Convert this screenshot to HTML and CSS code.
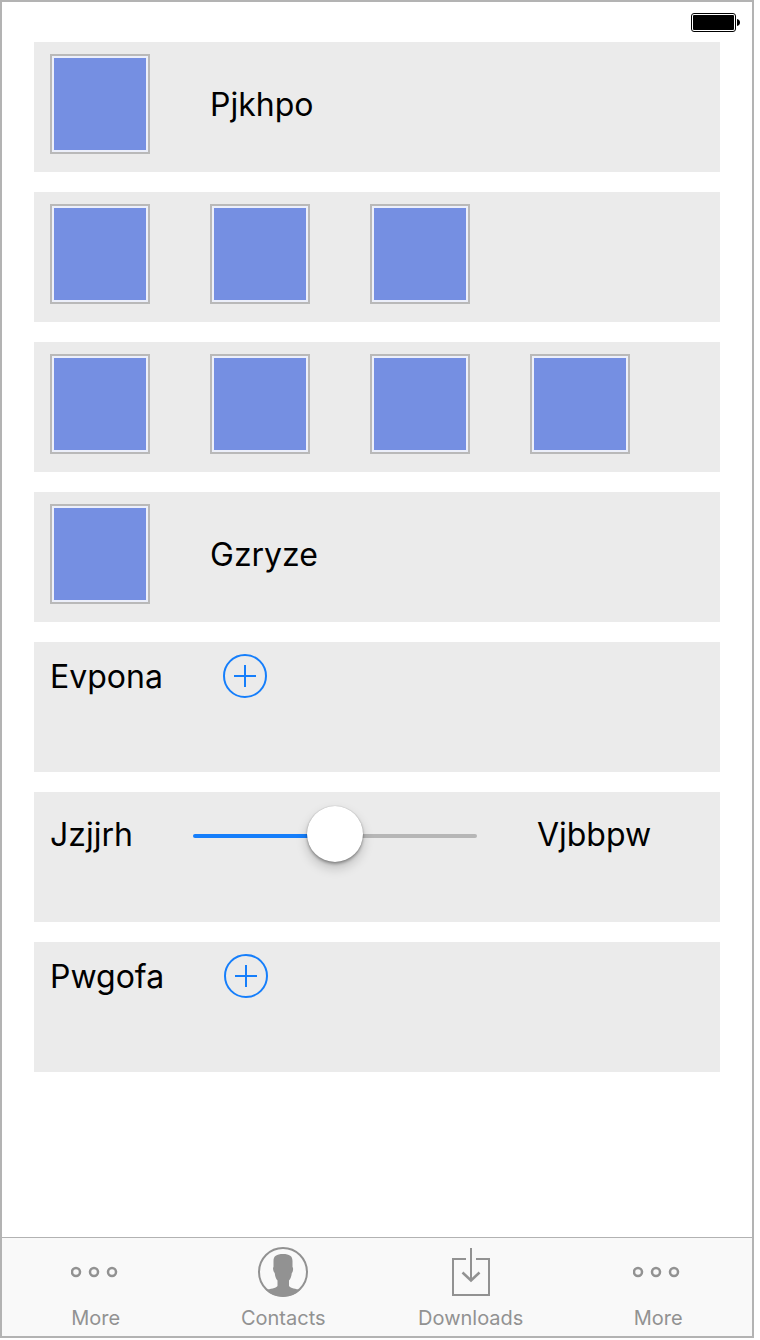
FILE: index.html
```
<!DOCTYPE html>
<html lang="en">
<head>
<meta charset="utf-8">
<meta name="viewport" content="width=device-width, initial-scale=1">
<title>Contacts</title>
<link rel="stylesheet" href="styles.css">
</head>
<body>
<div class="phone">
  <header class="status">
    <svg class="battery" width="49" height="19" viewBox="0 0 49 19" aria-hidden="true">
      <rect x=".5" y=".5" width="44" height="18" rx="2.5" fill="#fff" stroke="#000"/>
      <rect x="2" y="2" width="41" height="15" rx="1" fill="#000"/>
      <path d="M46 6c2 .4 3 1.700 3 3.500s-1 3.100-3 3.500z" fill="#000"/>
    </svg>
  </header>
  <main class="rows">
    <section class="row">
      <div class="items"><span class="tile"></span><span class="label">Pjkhpo</span></div>
    </section>
    <section class="row">
      <div class="items"><span class="tile"></span><span class="tile"></span><span class="tile"></span></div>
    </section>
    <section class="row">
      <div class="items"><span class="tile"></span><span class="tile"></span><span class="tile"></span><span class="tile"></span></div>
    </section>
    <section class="row">
      <div class="items"><span class="tile"></span><span class="label">Gzryze</span></div>
    </section>
    <section class="row">
      <div class="items">
        <span class="label" id="first-add">Evpona</span>
        <button class="add" type="button" aria-labelledby="first-add">
          <svg width="44" height="44" viewBox="0 0 44 44" aria-hidden="true"><circle cx="22" cy="22" r="21"/><path d="M11 22h22M22 11v22"/></svg>
        </button>
      </div>
    </section>
    <section class="row">
      <div class="items">
        <label class="label" for="level">Jzjjrh</label>
        <input class="slider" id="level" type="range" min="0" max="100" value="50">
        <span class="label">Vjbbpw</span>
      </div>
    </section>
    <section class="row">
      <div class="items">
        <span class="label" id="second-add">Pwgofa</span>
        <button class="add" type="button" aria-labelledby="second-add">
          <svg width="44" height="44" viewBox="0 0 44 44" aria-hidden="true"><circle cx="22" cy="22" r="21"/><path d="M11 22h22M22 11v22"/></svg>
        </button>
      </div>
    </section>
  </main>
  <nav class="tabs">
    <a class="tab" href="#more">
      <svg class="icon dots" width="50" height="52" viewBox="0 0 50 52" aria-hidden="true"><circle cx="5" cy="26" r="4"/><circle cx="23" cy="26" r="4"/><circle cx="41" cy="26" r="4"/></svg>
      More
    </a>
    <a class="tab" href="#contacts">
      <svg class="icon" width="50" height="52" viewBox="0 0 50 52" aria-hidden="true">
        <circle cx="25" cy="26" r="24"/>
        <path class="solid" d="M15.500 15C15.500 10 18.500 8 25 8s9.500 2 9.500 7v6c1 .8.8 4.500-.7 6-.4 3.500-1.300 6-2.800 7.500V40c1.500 2.500 7 2.800 11 4C37.500 48.500 31 50.500 25 50.500S12.500 48.500 8 44c4-1.200 10-1.500 11.500-4v-5.500c-1.500-1.500-2.400-4-2.800-7.500-1.500-1.500-2.200-5.200-1.200-6z"/>
      </svg>
      Contacts
    </a>
    <a class="tab" href="#downloads">
      <svg class="icon" width="50" height="52" viewBox="0 0 50 52" aria-hidden="true"><path d="M20 13H7v36h36V13H30M25 2v33"/><path class="head" d="M16.500 26.500l8.500 8 8.500-8"/></svg>
      Downloads
    </a>
    <a class="tab" href="#more">
      <svg class="icon dots" width="50" height="52" viewBox="0 0 50 52" aria-hidden="true"><circle cx="5" cy="26" r="4"/><circle cx="23" cy="26" r="4"/><circle cx="41" cy="26" r="4"/></svg>
      More
    </a>
  </nav>
</div>
</body>
</html>
```
FILE: styles.css
```
* {
  box-sizing: border-box;
}

body {
  margin: 0;
  padding: 0 6px 2px 0;
  background: #fff;
  color: #000;
  font-family: Inter, "Liberation Sans", sans-serif;
}

.phone {
  display: flex;
  flex-direction: column;
  min-height: calc(100vh - 2px);
  border: 2px solid #b3b3b3;
}

.status {
  display: flex;
  justify-content: flex-end;
  height: 40px;
  padding: 11px 12px 0;
}

.rows {
  display: flex;
  flex: 1;
  flex-direction: column;
  gap: 20px;
  padding: 0 32px 32px;
}

.row {
  min-height: 130px;
  padding: 12px 16px;
  background: #ebebeb;
}

.items {
  display: flex;
  align-items: center;
  gap: 60px;
}

.tile {
  width: 100px;
  height: 100px;
  padding: 2px;
  border: 2px solid #b9b9b9;
  background: #758fe2 content-box;
  box-shadow: inset 0 0 0 2px #eceffa;
}

.label {
  padding-top: 2px;
  font-size: 32px;
  line-height: 40px;
}

.add {
  width: 44px;
  height: 44px;
  padding: 0;
  border: 0;
  background: none;
}

.add svg {
  display: block;
  fill: none;
  stroke: #157efb;
  stroke-width: 2;
}

.slider {
  width: 284px;
  min-width: 120px;
  height: 60px;
  margin: 0;
  padding-top: 4px;
  appearance: none;
  background: none;
}

.slider::-webkit-slider-runnable-track {
  height: 4px;
  border-radius: 2px;
  background: linear-gradient(to right, #157efb 50%, #b6b6b6 50%);
}

.slider::-webkit-slider-thumb {
  width: 56px;
  height: 56px;
  margin-top: -28px;
  appearance: none;
  border-radius: 50%;
  background: #fff;
  box-shadow: 0 0 1px rgba(0, 0, 0, 0.3), 0 2px 3px rgba(0, 0, 0, 0.3), 0 6px 12px rgba(0, 0, 0, 0.2);
}

.tabs {
  display: grid;
  grid-template-columns: repeat(4, 1fr);
  border-top: 1px solid #b2b2b2;
  background: #f9f9f9;
}

.tab {
  display: flex;
  flex-direction: column;
  align-items: center;
  gap: 8px;
  padding: 8px 0 6px;
  color: #929292;
  font-size: 20px;
  line-height: 24px;
  text-decoration: none;
}

.icon {
  fill: none;
  stroke: #929292;
  stroke-width: 2;
}

.icon.dots,
.icon .head {
  stroke-width: 2.5;
}

.icon .solid {
  fill: #929292;
  stroke: none;
}
```
